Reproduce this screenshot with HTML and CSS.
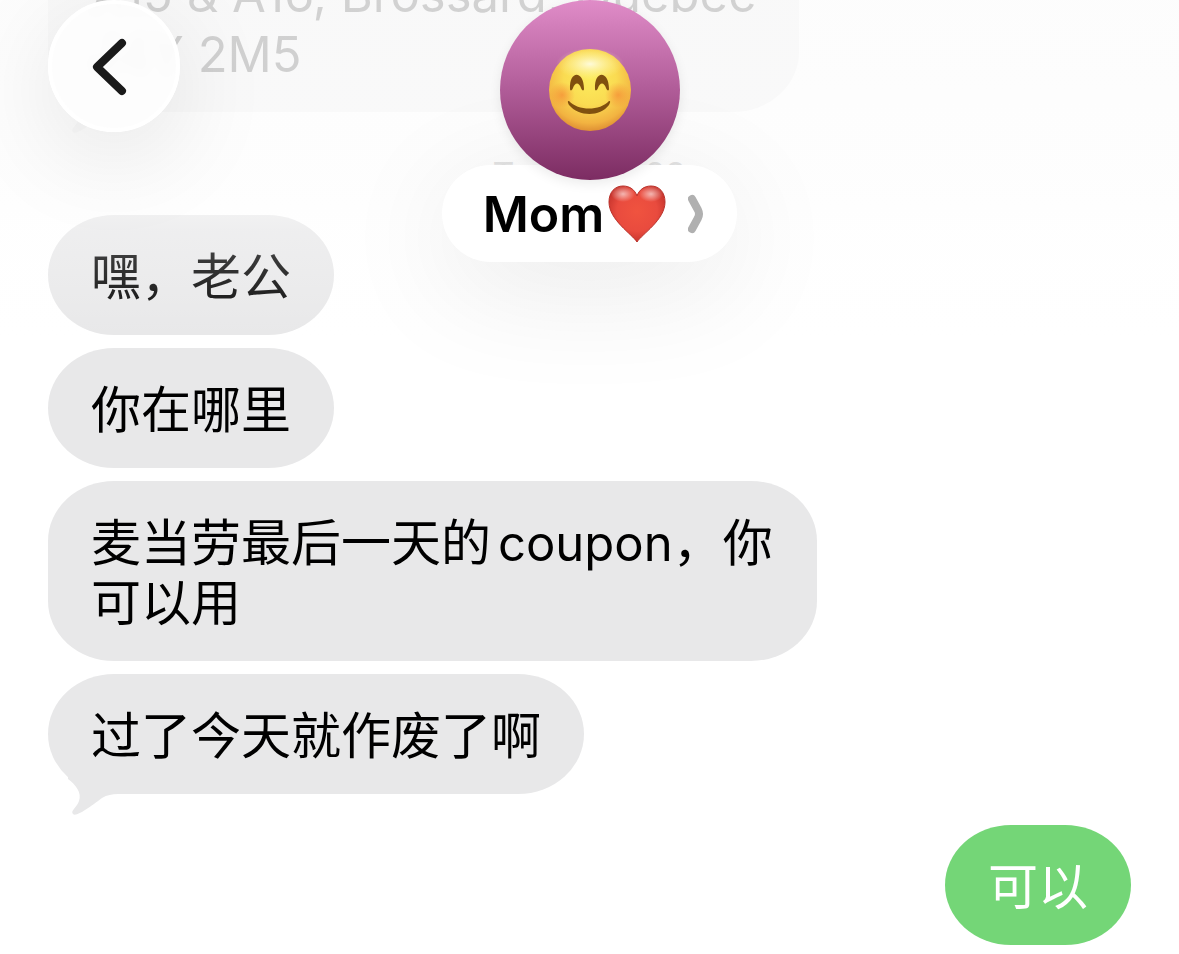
FILE: index.html
```html
<!DOCTYPE html>
<html lang="zh-CN">
<head>
    <meta charset="UTF-8">
    <meta name="viewport" content="width=device-width, initial-scale=1.0">
    <title>Mom</title>
    <link rel="stylesheet" href="styles.css">
</head>
<body>
    <header class="topbar">
        <button class="back-button" type="button" aria-label="Back">
            <svg viewBox="0 0 124 124" aria-hidden="true">
                <path d="M70 39 L45 63 L70 87" />
            </svg>
        </button>
        <div class="contact">
            <div class="avatar">
                <svg viewBox="0 0 84 84" aria-hidden="true">
                    <defs>
                        <radialGradient id="face" cx="50%" cy="36%" r="64%">
                            <stop offset="0" stop-color="#fcec5c"/>
                            <stop offset="0.5" stop-color="#fadb52"/>
                            <stop offset="0.85" stop-color="#f2b341"/>
                            <stop offset="1" stop-color="#df9034"/>
                        </radialGradient>
                        <radialGradient id="shine">
                            <stop offset="0" stop-color="#fffde8" stop-opacity="0.9"/>
                            <stop offset="1" stop-color="#fff6a0" stop-opacity="0"/>
                        </radialGradient>
                        <radialGradient id="blush">
                            <stop offset="0" stop-color="#f58a35" stop-opacity="0.7"/>
                            <stop offset="1" stop-color="#f58a35" stop-opacity="0"/>
                        </radialGradient>
                    </defs>
                    <circle cx="42" cy="42" r="41" fill="url(#face)"/>
                    <ellipse cx="42" cy="16" rx="34" ry="16" fill="url(#shine)"/>
                    <circle cx="14" cy="47" r="13" fill="url(#blush)"/>
                    <circle cx="70" cy="47" r="13" fill="url(#blush)"/>
                    <path class="ink" d="M22 41 C21 22 36 22 36 41 C36 43 34 43 33 40 C31 34 27 34 25 40 C24 43 22 43 22 41 Z"/>
                    <path class="ink" d="M47 41 C46 22 61 22 61 41 C61 43 59 43 58 40 C56 34 52 34 50 40 C49 43 47 43 47 41 Z"/>
                    <path class="ink" d="M21 53 C30 63 52 63 61 53 C63 53 62 55 61 57 C52 69 31 69 21 57 C20 55 19 53 21 53 Z"/>
                </svg>
            </div>
            <button class="name-pill" type="button">
                <span>Mom</span>
                <svg class="heart" viewBox="0 0 58 58" role="img" aria-label="heart">
                    <defs>
                        <radialGradient id="heart-fill" cx="50%" cy="45%" r="60%">
                            <stop offset="0" stop-color="#f0533f"/>
                            <stop offset="0.6" stop-color="#e94b3e"/>
                            <stop offset="1" stop-color="#c0302a"/>
                        </radialGradient>
                        <radialGradient id="heart-shine">
                            <stop offset="0" stop-color="#fff" stop-opacity="0.6"/>
                            <stop offset="1" stop-color="#fff" stop-opacity="0"/>
                        </radialGradient>
                    </defs>
                    <path d="M29 57 C24 49 1 35 1 17 C1 7 7 1 15 1 C22 1 27 5 29 11 C31 5 36 1 43 1 C51 1 57 7 57 17 C57 35 34 49 29 57 Z" fill="url(#heart-fill)" stroke="#b93029" stroke-width="1"/>
                    <ellipse cx="15" cy="9" rx="12" ry="8" fill="url(#heart-shine)"/>
                    <ellipse cx="43" cy="9" rx="12" ry="8" fill="url(#heart-shine)"/>
                </svg>
                <svg class="chevron" viewBox="0 0 16 40" aria-hidden="true">
                    <path d="M4 5 L10 16 Q12 20 10 24 L4 35"/>
                </svg>
            </button>
        </div>
    </header>

    <main class="chat">
        <p class="bubble tail"><span class="latin">A15 &amp; A16, Brossard, Quebec<br>J4Y 2M5</span></p>
        <time class="stamp">Today 12:29</time>
        <p class="bubble">嘿，老公</p>
        <p class="bubble">你在哪里</p>
        <p class="bubble">麦当劳最后一天的<span class="latin word">coupon</span>，你可以用</p>
        <p class="bubble tail">过了今天就作废了啊</p>
        <p class="bubble sent">可以</p>
    </main>
</body>
</html>
```
FILE: styles.css
```css
* {
    box-sizing: border-box;
}
body {
    margin: 0;
    background: #fff;
    color: #000;
    font-family: Inter, "Noto Sans CJK SC", sans-serif;
}

/* Header floats over the messages */
.topbar {
    position: absolute;
    top: 0;
    left: 0;
    right: 0;
    z-index: 1;
    height: 336px;
    display: flex;
    justify-content: center;
    background: linear-gradient(rgba(252, 252, 252, 0.83) 0, rgba(253, 253, 253, 0.81) 170px, rgba(253, 253, 253, 0.3) 230px, rgba(253, 253, 253, 0.12) 300px, rgba(253, 253, 253, 0) 336px);
}
button {
    font: inherit;
    color: inherit;
    cursor: pointer;
}
.back-button {
    position: absolute;
    top: 0;
    left: 48px;
    width: 132px;
    height: 132px;
    padding: 0;
    border: 4px solid #fff;
    border-radius: 50%;
    background: rgba(253, 253, 253, 0.9);
    backdrop-filter: blur(6px);
    box-shadow: 0 24px 100px rgba(0, 0, 0, 0.1);
}
.back-button svg {
    display: block;
    width: 100%;
    height: 100%;
    fill: none;
    stroke: #1a1a1a;
    stroke-width: 8;
    stroke-linecap: round;
    stroke-linejoin: round;
}
.contact {
    display: flex;
    flex-direction: column;
    align-items: center;
}
.avatar {
    z-index: 1;
    display: grid;
    place-items: center;
    width: 180px;
    height: 180px;
    border-radius: 50%;
    background: linear-gradient(#e08cc8, #b05c98 50%, #7c2c62);
    box-shadow: 0 4px 12px rgba(0, 0, 0, 0.08);
}
.avatar svg {
    width: 84px;
    height: 84px;
}
.ink {
    fill: #80500f;
}
.name-pill {
    display: flex;
    align-items: center;
    height: 97px;
    margin-top: -15px;
    padding: 0 33px 0 41px;
    border: none;
    border-radius: 49px;
    background: #fff;
    box-shadow: 0 24px 120px rgba(0, 0, 0, 0.09);
    font-size: 50px;
    font-weight: 600;
}
.heart {
    width: 58px;
    height: 58px;
    margin: 0 22px 0 4px;
}
.chevron {
    width: 16px;
    height: 40px;
    fill: none;
    stroke: #b0b0b0;
    stroke-width: 8;
    stroke-linecap: round;
    stroke-linejoin: round;
}

/* Messages stick to the bottom */
.chat {
    display: flex;
    flex-direction: column;
    justify-content: flex-end;
    align-items: flex-start;
    gap: 13px;
    height: 100vh;
    padding: 0 48px 9px;
    overflow: hidden;
}
.bubble {
    position: relative;
    flex-shrink: 0;
    max-width: 71%;
    margin: 0;
    padding: 32px 43px 28px;
    border-radius: 66px / 60px;
    background: #e8e8e9;
    font-size: 50px;
    line-height: 60px;
}
.latin {
    font-size: 49px;
    line-height: 1;
}
.word {
    margin-left: 7px;
}
.tail::after {
    content: "";
    position: absolute;
    left: 20px;
    bottom: -21px;
    width: 50px;
    height: 50px;
    background: #e8e8e9;
    clip-path: path("M0 14 C8 20 14 28 11 36 C9 42 2 46 5 49 C8 53 26 39 34 33 C39 30 44 29 50 29 L50 0 L0 0 Z");
}
.stamp {
    align-self: center;
    margin: 22px 0 0;
    color: #707070;
    font-size: 34px;
    line-height: 55px;
}
.sent {
    align-self: flex-end;
    margin-top: 18px;
    background: #74d677;
    color: #fff;
}
```
